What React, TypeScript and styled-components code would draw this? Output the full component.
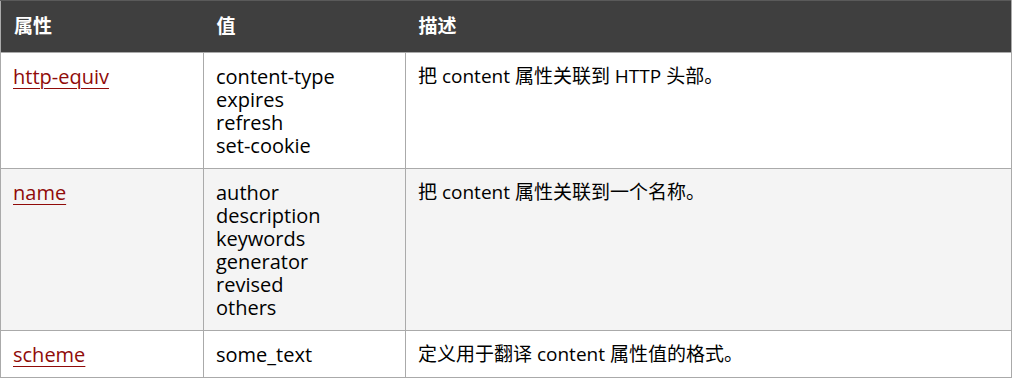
import React from 'react'
import styled, { createGlobalStyle } from 'styled-components'

const GlobalStyle = createGlobalStyle`
  body {
    margin: 0;
    background: #ffffff;
    font-family: 'Open Sans', 'Noto Sans CJK SC', sans-serif;
  }
`

const Table = styled.table`
  width: 1012px;
  border-collapse: collapse;
  table-layout: fixed;
  font-size: 19px;
  line-height: 23px;
  color: #000;
  border: 1px solid #aaaaaa;
  border-top: 1px solid #5a5a5a;

  th {
    background: #3f3f3f;
    color: #ffffff;
    font-weight: 700;
    text-align: left;
    padding: 14px 12px 14px 13px;
    border: none;
  }
`

const Cell = styled.td<{ $latin?: boolean }>`
  vertical-align: top;
  padding: 12px 12px 11px 12px;
  border: 1px solid #aaaaaa;
  font-size: ${(p) => (p.$latin ? '20px' : '19px')};
`

const Row = styled.tr<{ $shaded?: boolean }>`
  background: ${(p) => (p.$shaded ? '#f4f4f4' : '#ffffff')};
`

const AttrLink = styled.a`
  color: #900b09;
  text-decoration: underline;
  text-underline-offset: 4px;
  text-decoration-thickness: 1px;
`

const Values = styled.div`
  display: flex;
  flex-direction: column;
`

const rows = [
  {
    name: 'http-equiv',
    values: ['content-type', 'expires', 'refresh', 'set-cookie'],
    desc: '把 content 属性关联到 HTTP 头部。',
  },
  {
    name: 'name',
    values: ['author', 'description', 'keywords', 'generator', 'revised', 'others'],
    desc: '把 content 属性关联到一个名称。',
  },
  {
    name: 'scheme',
    values: ['some_text'],
    desc: '定义用于翻译 content 属性值的格式。',
  },
]

export default function App(): JSX.Element {
  return (
    <>
      <GlobalStyle />
      <Table>
        <colgroup>
          <col style={{ width: 203 }} />
          <col style={{ width: 202 }} />
          <col />
        </colgroup>
        <thead>
          <tr>
            <th>属性</th>
            <th>值</th>
            <th>描述</th>
          </tr>
        </thead>
        <tbody>
          {rows.map((r, i) => (
            <Row key={r.name} $shaded={i % 2 === 1}>
              <Cell $latin>
                <AttrLink href='#'>{r.name}</AttrLink>
              </Cell>
              <Cell $latin>
                <Values>
                  {r.values.map((v) => (
                    <span key={v}>{v}</span>
                  ))}
                </Values>
              </Cell>
              <Cell>{r.desc}</Cell>
            </Row>
          ))}
        </tbody>
      </Table>
    </>
  )
}
